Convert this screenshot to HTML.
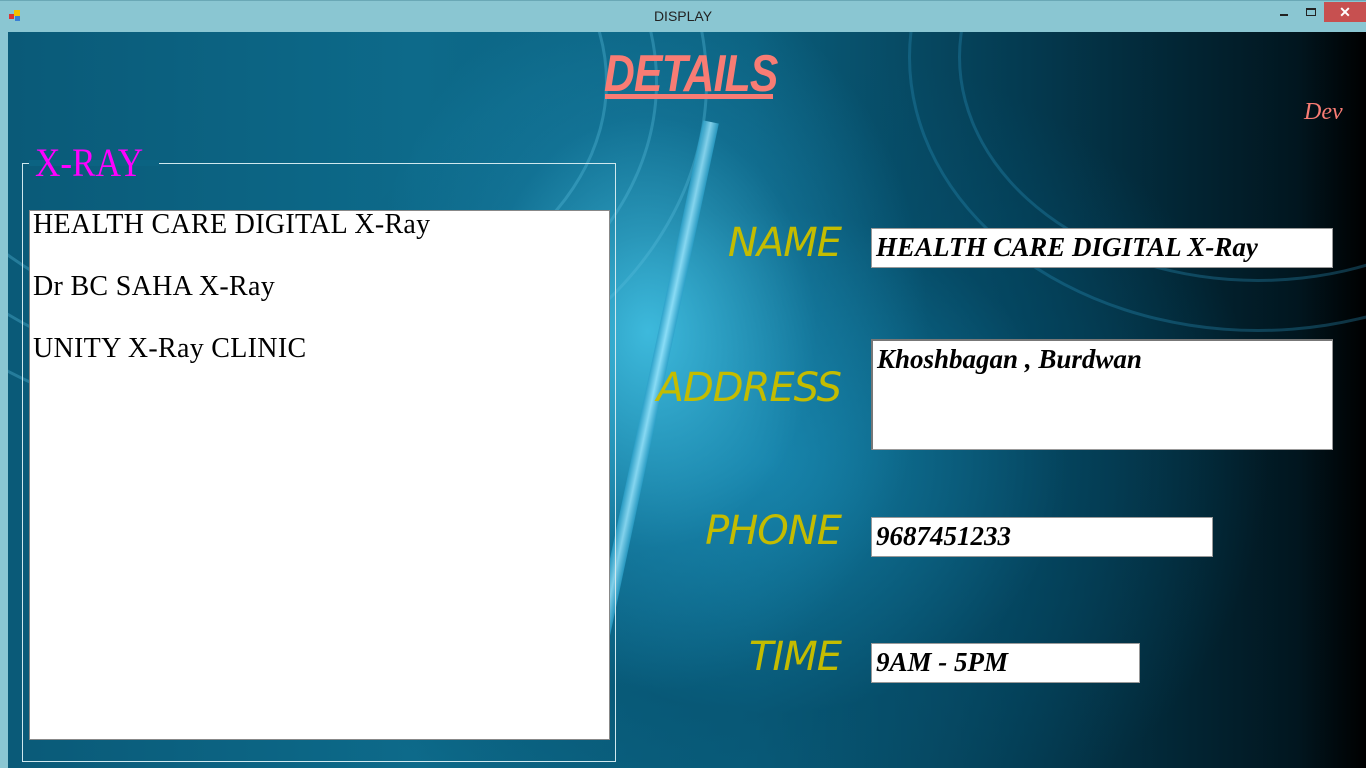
<!DOCTYPE html>
<html><head><meta charset="utf-8"><style>
*{margin:0;padding:0;box-sizing:border-box}
body{width:1366px;height:768px;overflow:hidden;background:#8ac6d2;position:relative;font-family:"Liberation Sans",sans-serif}
.title{position:absolute;left:0;top:0;width:1366px;height:32px;background:#8ac6d2;border-top:1px solid #6aa8b6}
.title .t{position:absolute;left:0;width:1366px;text-align:center;top:7px;font-size:14px;color:#222}
.close{position:absolute;left:1324px;top:1px;width:42px;height:20px;background:#c75050;color:#fff;text-align:center;font-size:14px;line-height:20px;font-weight:bold}
.min{position:absolute;left:1280px;top:13px;width:8px;height:2px;background:#222}
.max{position:absolute;left:1306px;top:7px;width:10px;height:8px;border:1px solid #222;border-top-width:2px}
.icon{position:absolute;left:9px;top:9px;width:14px;height:12px}
.bg{position:absolute;left:8px;top:32px;width:1358px;height:736px;overflow:hidden;
background:
radial-gradient(ellipse 280px 360px at 640px 300px, rgba(70,200,235,.85), rgba(30,140,180,.4) 60%, rgba(0,0,0,0) 100%),
radial-gradient(ellipse 500px 420px at 760px 430px, rgba(20,130,170,.9), rgba(5,80,110,.5) 60%, rgba(0,0,0,0) 100%),
linear-gradient(90deg,#0a5a78 0%,#0d6a8a 30%,#0a5e7c 55%,#043a50 75%,#01161f 95%,#000 100%);}
.ring{position:absolute;border-radius:50%;border:3px solid rgba(90,190,220,.35)}
.gb{position:absolute;left:22px;top:163px;width:594px;height:599px;border:1px solid #cfe8ee}
.gbl{position:absolute;left:35px;top:139px;font-family:"Liberation Serif",serif;font-size:40px;color:#ff00ff;transform:scaleX(.88);transform-origin:left}
.gbmask{position:absolute;left:29px;top:160px;width:130px;height:6px;background:#0b6382}
.list{position:absolute;left:29px;top:210px;width:581px;height:530px;background:#fff;border:1px solid #888}
.list div{font-family:"Liberation Serif",serif;font-size:28px;color:#000;position:absolute;left:3px;transform:scaleX(1.0);letter-spacing:.3px}
.details{position:absolute;left:604px;top:44px;font-family:"Liberation Sans",sans-serif;font-style:italic;font-weight:bold;font-size:52px;color:#f87c74;letter-spacing:-1px;transform:scaleX(.82);transform-origin:left}
.uline{position:absolute;left:605px;top:94px;height:5px;background:#f87c74}
.dev{position:absolute;left:1304px;top:99px;font-family:"Liberation Serif",serif;font-style:italic;font-size:24px;color:#f87c74}
.lbl{position:absolute;right:525px;font-family:"DejaVu Sans",sans-serif;font-style:italic;font-size:40px;color:#c4bc00;letter-spacing:-1px}
.box{position:absolute;background:#fff;border:1px solid #999;font-family:"Liberation Serif",serif;font-style:italic;font-weight:bold;font-size:27px;color:#000;padding:3px 0 0 4px}
</style></head><body>
<div class="title"><svg class="icon" viewBox="0 0 14 12"><rect x="0" y="4" width="5" height="5" fill="#d33"/><rect x="5" y="0" width="6" height="6" fill="#f5c000"/><rect x="6" y="6" width="5" height="5" fill="#3a7fd5"/></svg><div class="t">DISPLAY</div><div class="min"></div><div class="max"></div><div class="close">✕</div></div>
<div class="bg">
<div class="ring" style="left:-200px;top:-300px;width:900px;height:700px"></div>
<div class="ring" style="left:-150px;top:-250px;width:800px;height:600px"></div>
<div class="ring" style="left:-100px;top:-200px;width:700px;height:500px"></div>
<div class="ring" style="left:900px;top:-250px;width:700px;height:550px;border-color:rgba(40,140,180,.35)"></div>
<div class="ring" style="left:950px;top:-200px;width:600px;height:450px;border-color:rgba(40,140,180,.35)"></div>
<div style="position:absolute;left:695px;top:90px;width:16px;height:560px;background:linear-gradient(90deg,#2a9fc8,#9ee8ff,#2a9fc8);transform:rotate(12deg);transform-origin:top;opacity:.8"></div>
</div>
<div class="details">DETAILS</div>
<div class="uline" style="width:168px"></div>
<div class="dev">Dev</div>
<div class="gb"></div>
<div class="gbmask"></div>
<div class="gbl">X-RAY</div>
<div class="list">
<div style="top:-2px">HEALTH CARE DIGITAL X-Ray</div>
<div style="top:60px">Dr BC SAHA X-Ray</div>
<div style="top:122px">UNITY X-Ray CLINIC</div>
</div>
<div class="lbl" style="top:220px">NAME</div>
<div class="lbl" style="top:365px">ADDRESS</div>
<div class="lbl" style="top:508px">PHONE</div>
<div class="lbl" style="top:634px">TIME</div>
<div class="box" style="left:871px;top:228px;width:462px;height:40px">HEALTH CARE DIGITAL X-Ray</div>
<div class="box" style="left:871px;top:339px;width:462px;height:111px;border-top:2px solid #777;border-left:2px solid #777">Khoshbagan , Burdwan</div>
<div class="box" style="left:871px;top:517px;width:342px;height:40px">9687451233</div>
<div class="box" style="left:871px;top:643px;width:269px;height:40px">9AM - 5PM</div>
</body></html>
